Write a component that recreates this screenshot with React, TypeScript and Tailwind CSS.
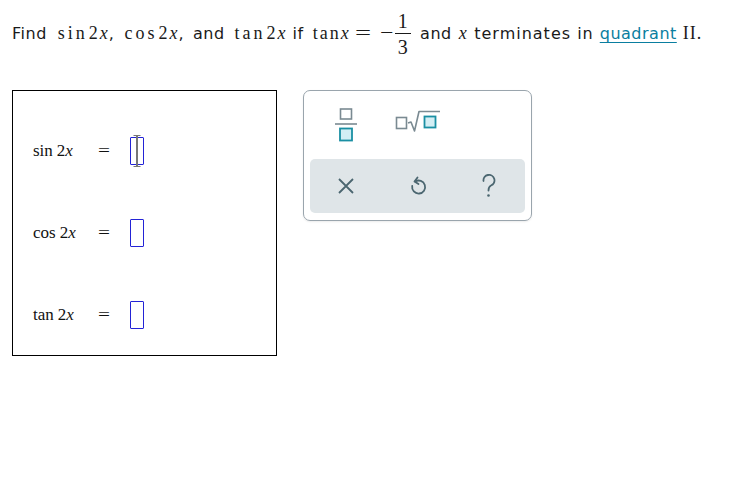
import React from "react";

function Fn({ name, ml }: { name: string; ml: string }) {
  return (
    <span className={"font-[Liberation_Serif] text-[18px] " + ml}>
      <span className="tracking-[3px]">{name}</span>
      <span className="ml-[1px] tracking-[1px]">2</span>
      <i className="ml-[1px] tracking-[1px]">x</i>
    </span>
  );
}

function InputBox({ active = false }: { active?: boolean }) {
  return (
    <div className="relative w-[14px] h-[28px] border-[1.5px] border-[#2323d6] rounded-[1px]">
      {active && (
        <>
          <div className="absolute left-1/2 -translate-x-1/2 top-[-3px] bottom-[-3px] w-[2px] bg-[#777]" />
          <div className="absolute left-1/2 -translate-x-1/2 top-[-3px] w-[7px] h-[1px] bg-[#777]" />
          <div className="absolute left-1/2 -translate-x-1/2 bottom-[-3px] w-[7px] h-[1px] bg-[#777]" />
        </>
      )}
    </div>
  );
}

function Row({ name, active }: { name: string; active?: boolean }) {
  return (
    <div className="flex items-center h-[28px]">
      <div className="w-[65px] font-[Liberation_Serif] text-[17px] text-[#111]">
        {name}
        <span className="ml-[4px]">2</span>
        <i>x</i>
      </div>
      <div className="w-[32px] font-[Liberation_Serif] text-[17px] text-[#111]">
        <span className="inline-block scale-x-125 origin-left">=</span>
      </div>
      <InputBox active={active} />
    </div>
  );
}

export default function App() {
  return (
    <div className="w-[740px] h-[502px] bg-white text-[#1a1a1a] relative overflow-hidden">
      <div className="pl-[12px] pt-[9px] h-[90px] font-[DejaVu_Sans] text-[16px] tracking-[0.5px] leading-[48px] whitespace-nowrap">
        <span>Find</span>
        <Fn name="sin" ml="ml-[11px]" />
        <span>,</span>
        <Fn name="cos" ml="ml-[10px]" />
        <span>,</span>
        <span className="ml-[9px]">and</span>
        <Fn name="tan" ml="ml-[10px]" />
        <span className="ml-[6px]">if</span>
        <span className="font-[Liberation_Serif] text-[18px] ml-[9px]">
          <span className="tracking-[2px]">tan</span>
          <i className="tracking-[1px]">x</i>
        </span>
        <span className="font-[Liberation_Serif] text-[19px] ml-[5px] inline-block scale-x-150 origin-left">=</span>
        <span className="font-[Liberation_Serif] text-[19px] ml-[14px] inline-block scale-x-125 origin-left">−</span>
        <span className="inline-flex flex-col items-center align-middle ml-[4px] -translate-y-[1px] font-[Liberation_Serif] text-[20px] leading-[18px]">
          <span className="pb-[3px]">1</span>
          <span className="w-[16px] h-[1px] bg-[#1a1a1a]" />
          <span className="pt-[4px]">3</span>
        </span>
        <span className="ml-[9px]">and</span>
        <i className="font-[Liberation_Serif] text-[18px] ml-[7px]">x</i>
        <span className="ml-[7px] tracking-[1px]">terminates in</span>
        <span className="ml-[6px] text-[#0a7ea0] underline underline-offset-[3px]">quadrant</span>
        <span className="ml-[6px] font-[Liberation_Serif] text-[18px] tracking-[1px]">II.</span>
      </div>

      <div className="flex items-start pl-[12px] gap-[26px]">
        <div className="w-[265px] h-[266px] border border-black flex flex-col pl-[20px] pt-[46px] gap-[54px]">
          <Row name="sin" active />
          <Row name="cos" />
          <Row name="tan" />
        </div>

        <div className="w-[229px] h-[131px] border border-[#9aa5ad] rounded-[7px] px-[6px] pt-[12px] shadow-[0_1px_2px_rgba(0,0,0,0.08)]">
          <div className="flex items-start h-[56px]">
            <div className="w-[72px] flex justify-center mt-[5px]">
              <svg width="24" height="34" viewBox="0 0 24 34">
                <rect x="6.5" y="1" width="11" height="10" fill="none" stroke="#7a8a92" strokeWidth="1.6" />
                <line x1="1" y1="16" x2="23" y2="16" stroke="#7a8a92" strokeWidth="1.6" />
                <rect x="6" y="20.5" width="12" height="12" fill="#d3eef4" stroke="#1a8fa3" strokeWidth="1.8" />
              </svg>
            </div>
            <div className="w-[72px] flex justify-center mt-[6px]">
              <svg width="46" height="24" viewBox="0 0 46 24">
                <rect x="1.5" y="8.5" width="10" height="11" fill="none" stroke="#7a8a92" strokeWidth="1.6" />
                <path d="M13 14 L16 13 L19.5 22 L24 2.5 L45 2.5" fill="none" stroke="#7a8a92" strokeWidth="1.6" strokeLinejoin="round" />
                <rect x="29.5" y="7.5" width="11" height="11" fill="#d3eef4" stroke="#1a8fa3" strokeWidth="1.8" />
              </svg>
            </div>
          </div>
          <div className="h-[54px] rounded-[5px] bg-[#dfe5e8] flex items-center">
            <div className="w-[72px] flex justify-center">
              <svg width="18" height="18" viewBox="0 0 18 18">
                <path d="M2 2 L16 16 M16 2 L2 16" stroke="#4b6670" strokeWidth="1.8" />
              </svg>
            </div>
            <div className="w-[72px] flex justify-center">
              <svg width="18" height="20" viewBox="0 0 18 20">
                <path d="M6.2 5.5 A6.5 6.5 0 1 1 3.2 10" fill="none" stroke="#4b6670" strokeWidth="1.8" strokeLinecap="round" />
                <path d="M8.5 1.5 L5.5 5.5 L9.5 8" fill="none" stroke="#4b6670" strokeWidth="1.8" strokeLinecap="round" strokeLinejoin="round" />
              </svg>
            </div>
            <div className="w-[72px] flex justify-center">
              <svg width="16" height="24" viewBox="0 0 16 24">
                <path d="M2.5 7 A5.5 5.5 0 1 1 10 11.5 C8 12.5 7.5 13.5 7.5 16.5" fill="none" stroke="#4b6670" strokeWidth="1.8" strokeLinecap="round" />
                <circle cx="7.5" cy="21.5" r="1.3" fill="#4b6670" />
              </svg>
            </div>
          </div>
        </div>
      </div>
    </div>
  );
}
